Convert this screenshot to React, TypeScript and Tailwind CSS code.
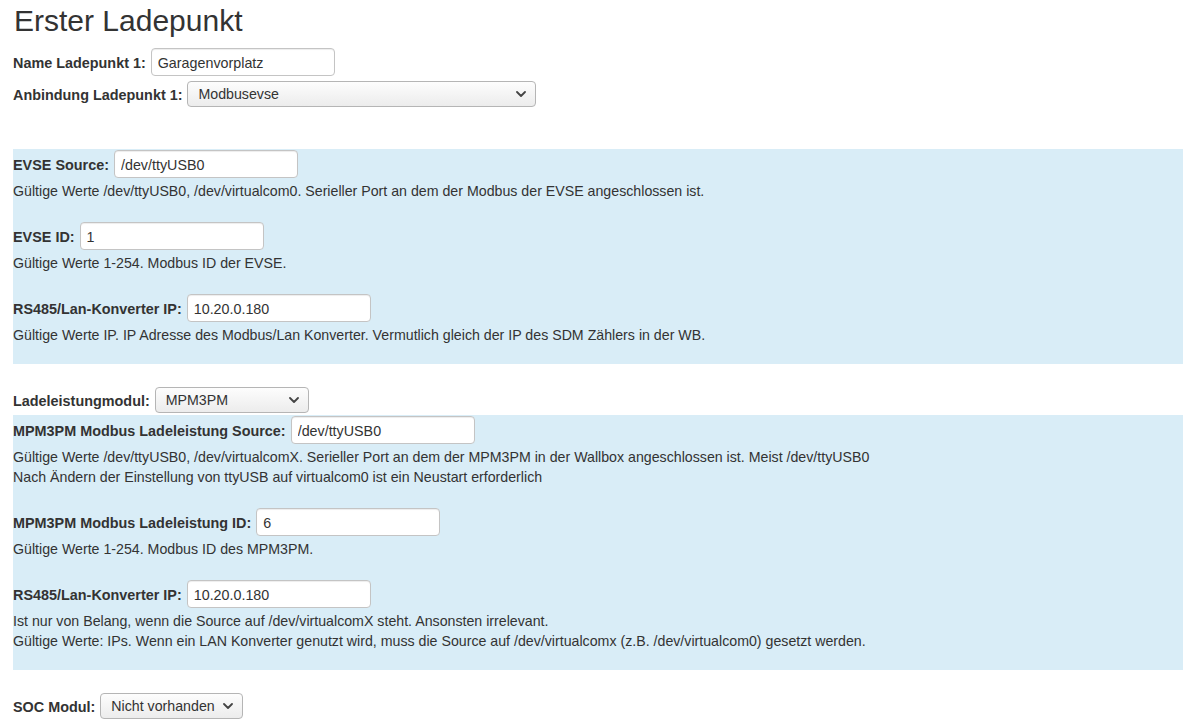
import React from "react"

function Chevron() {
  return (
    <svg width="10" height="6" viewBox="0 0 10 6" className="shrink-0">
      <path d="M1 1 L5 5 L9 1" fill="none" stroke="#444" strokeWidth="1.8" strokeLinecap="round" strokeLinejoin="round" />
    </svg>
  )
}

function TextInput({ value }: { value: string }) {
  return (
    <input
      readOnly
      value={value}
      className="w-[184px] h-[28px] px-[6px] pt-[2px] border border-[#c4c4c4] rounded-[4px] bg-white text-[14.3px] text-[#333] shadow-[inset_0_1px_1px_rgba(0,0,0,0.075)] outline-none"
    />
  )
}

function SelectBox({ value, width }: { value: string; width: string }) {
  return (
    <div
      className={`${width} h-[26px] pl-[10px] pr-[9px] flex items-center justify-between border border-[#b5b5b5] rounded-[4px] bg-gradient-to-b from-[#fdfdfd] to-[#ececec] text-[14.2px] text-[#333]`}
    >
      <span className="pt-[2px]">{value}</span>
      <Chevron />
    </div>
  )
}

function Row({ label, children }: { label: string; children: React.ReactNode }) {
  return (
    <div className="flex items-center gap-[5px]">
      <span className="font-bold text-[14.4px] pt-[3px]">{label}</span>
      {children}
    </div>
  )
}

function Help({ lines }: { lines: string[] }) {
  return (
    <div className="mt-[3px] text-[14.2px] leading-[20px]">
      {lines.map((l) => (
        <div key={l}>{l}</div>
      ))}
    </div>
  )
}

export default function App() {
  return (
    <div
      className="pt-[4px] pb-[4px] text-[#333] bg-white"
      style={{ fontFamily: '"Liberation Sans", Arial, sans-serif' }}
    >
      <h1 className="ml-[14px] text-[30px] leading-[33px] font-normal">
        Erster Ladepunkt
      </h1>

      <div className="ml-[13px] mt-[11px]">
        <Row label="Name Ladepunkt 1:">
          <TextInput value="Garagenvorplatz" />
        </Row>
      </div>

      <div className="ml-[13px] mt-[5px]">
        <Row label="Anbindung Ladepunkt 1:">
          <SelectBox value="Modbusevse" width="w-[349px]" />
        </Row>
      </div>

      <div className="ml-[13px] w-[1170px] mt-[42px] pt-[1px] pb-[19px] bg-[#d9edf7]">
        <Row label="EVSE Source:">
          <TextInput value="/dev/ttyUSB0" />
        </Row>
        <Help lines={["Gültige Werte /dev/ttyUSB0, /dev/virtualcom0. Serieller Port an dem der Modbus der EVSE angeschlossen ist."]} />

        <div className="mt-[21px]">
          <Row label="EVSE ID:">
            <TextInput value="1" />
          </Row>
        </div>
        <Help lines={["Gültige Werte 1-254. Modbus ID der EVSE."]} />

        <div className="mt-[21px]">
          <Row label="RS485/Lan-Konverter IP:">
            <TextInput value="10.20.0.180" />
          </Row>
        </div>
        <Help lines={["Gültige Werte IP. IP Adresse des Modbus/Lan Konverter. Vermutlich gleich der IP des SDM Zählers in der WB."]} />
      </div>

      <div className="ml-[13px] mt-[23px]">
        <Row label="Ladeleistungmodul:">
          <SelectBox value="MPM3PM" width="w-[154px]" />
        </Row>
      </div>

      <div className="ml-[13px] w-[1170px] mt-[2px] pt-[1px] pb-[19px] bg-[#d9edf7]">
        <Row label="MPM3PM Modbus Ladeleistung Source:">
          <TextInput value="/dev/ttyUSB0" />
        </Row>
        <Help
          lines={[
            "Gültige Werte /dev/ttyUSB0, /dev/virtualcomX. Serieller Port an dem der MPM3PM in der Wallbox angeschlossen ist. Meist /dev/ttyUSB0",
            "Nach Ändern der Einstellung von ttyUSB auf virtualcom0 ist ein Neustart erforderlich",
          ]}
        />

        <div className="mt-[21px]">
          <Row label="MPM3PM Modbus Ladeleistung ID:">
            <TextInput value="6" />
          </Row>
        </div>
        <Help lines={["Gültige Werte 1-254. Modbus ID des MPM3PM."]} />

        <div className="mt-[21px]">
          <Row label="RS485/Lan-Konverter IP:">
            <TextInput value="10.20.0.180" />
          </Row>
        </div>
        <Help
          lines={[
            "Ist nur von Belang, wenn die Source auf /dev/virtualcomX steht. Ansonsten irrelevant.",
            "Gültige Werte: IPs. Wenn ein LAN Konverter genutzt wird, muss die Source auf /dev/virtualcomx (z.B. /dev/virtualcom0) gesetzt werden.",
          ]}
        />
      </div>

      <div className="ml-[13px] mt-[23px]">
        <Row label="SOC Modul:">
          <SelectBox value="Nicht vorhanden" width="w-[143px]" />
        </Row>
      </div>
    </div>
  )
}
